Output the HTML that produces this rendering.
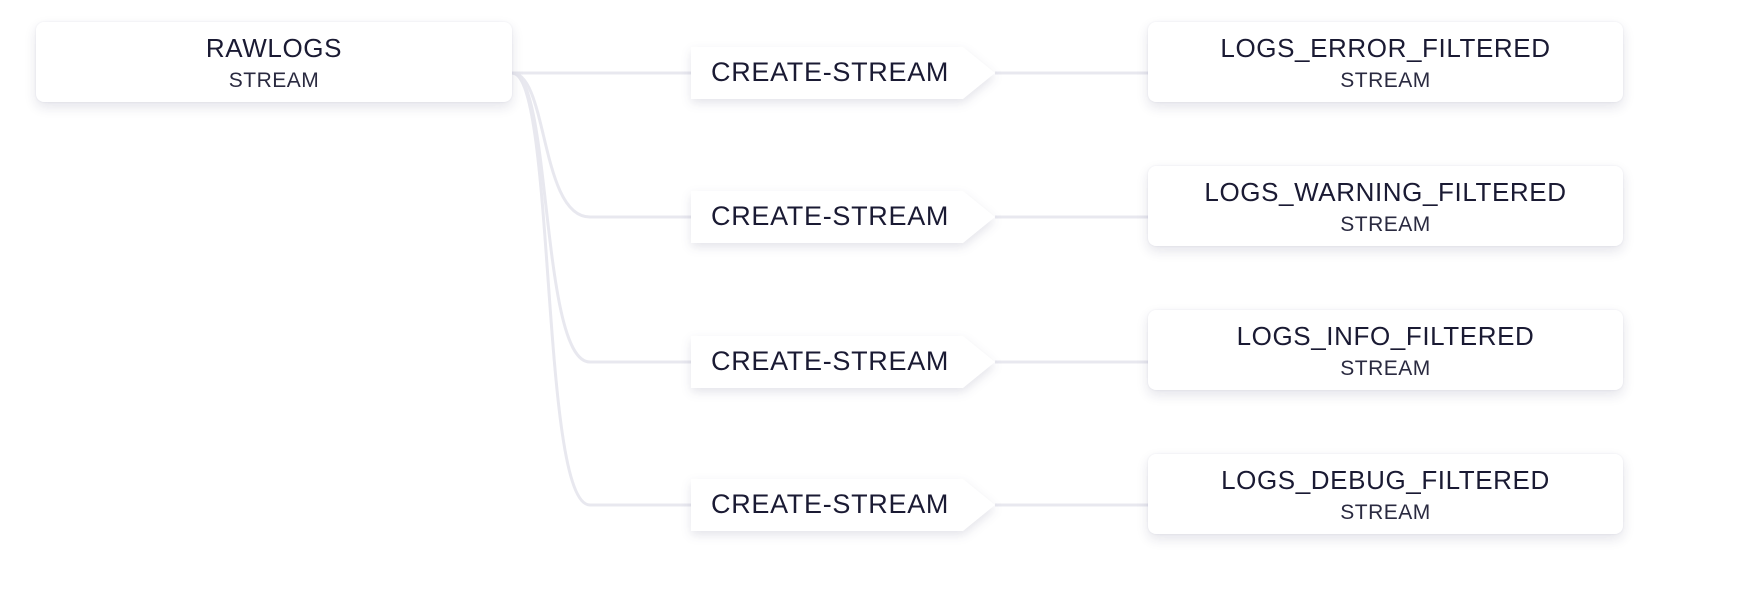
<!DOCTYPE html>
<html><head><meta charset="utf-8">
<style>
html,body{margin:0;padding:0;background:#fff;width:1742px;height:604px;overflow:hidden;font-family:"Liberation Sans",sans-serif;color:#1a1a33;}
.box{position:absolute;background:#fff;border-radius:8px;box-shadow:0 5px 12px rgba(30,30,80,0.12),0 0 2px rgba(30,30,80,0.07);text-align:center;}
.t{position:absolute;left:0;right:0;top:10px;font-size:26px;line-height:32px;letter-spacing:0.6px;}
.s{position:absolute;left:0;right:0;top:46px;font-size:21px;line-height:26px;font-weight:300;color:#2a2a40;letter-spacing:0.5px;}
.op{position:absolute;width:304px;height:52px;filter:drop-shadow(0 4px 5px rgba(30,30,80,0.12));}
.op div{width:100%;height:100%;background:#fff;clip-path:polygon(0 0,272px 0,304px 26px,272px 52px,0 52px);}
.op span{position:absolute;left:20px;top:9px;font-size:27px;line-height:32px;letter-spacing:0.7px;}
</style></head><body>
<svg width="1742" height="604" style="position:absolute;left:0;top:0">
<g fill="none" stroke="#e8e8ef" stroke-width="3">
<path d="M512 73 L691 73"/>
<path d="M512 73 C548 73 540 217 590 217 L691 217"/>
<path d="M512 73 C552 73 540 362 590 362 L691 362"/>
<path d="M512 73 C556 73 540 505 590 505 L691 505"/>
<path d="M995 73 L1148 73"/>
<path d="M995 217 L1148 217"/>
<path d="M995 362 L1148 362"/>
<path d="M995 505 L1148 505"/>
</g></svg>
<div class="box" style="left:36px;top:22px;width:476px;height:80px"><div class="t">RAWLOGS</div><div class="s">STREAM</div></div>

<div class="op" style="left:691px;top:47px"><div></div><span>CREATE-STREAM</span></div>
<div class="op" style="left:691px;top:191px"><div></div><span>CREATE-STREAM</span></div>
<div class="op" style="left:691px;top:336px"><div></div><span>CREATE-STREAM</span></div>
<div class="op" style="left:691px;top:479px"><div></div><span>CREATE-STREAM</span></div>

<div class="box" style="left:1148px;top:22px;width:475px;height:80px"><div class="t">LOGS_ERROR_FILTERED</div><div class="s">STREAM</div></div>
<div class="box" style="left:1148px;top:166px;width:475px;height:80px"><div class="t">LOGS_WARNING_FILTERED</div><div class="s">STREAM</div></div>
<div class="box" style="left:1148px;top:310px;width:475px;height:80px"><div class="t">LOGS_INFO_FILTERED</div><div class="s">STREAM</div></div>
<div class="box" style="left:1148px;top:454px;width:475px;height:80px"><div class="t">LOGS_DEBUG_FILTERED</div><div class="s">STREAM</div></div>
</body></html>
